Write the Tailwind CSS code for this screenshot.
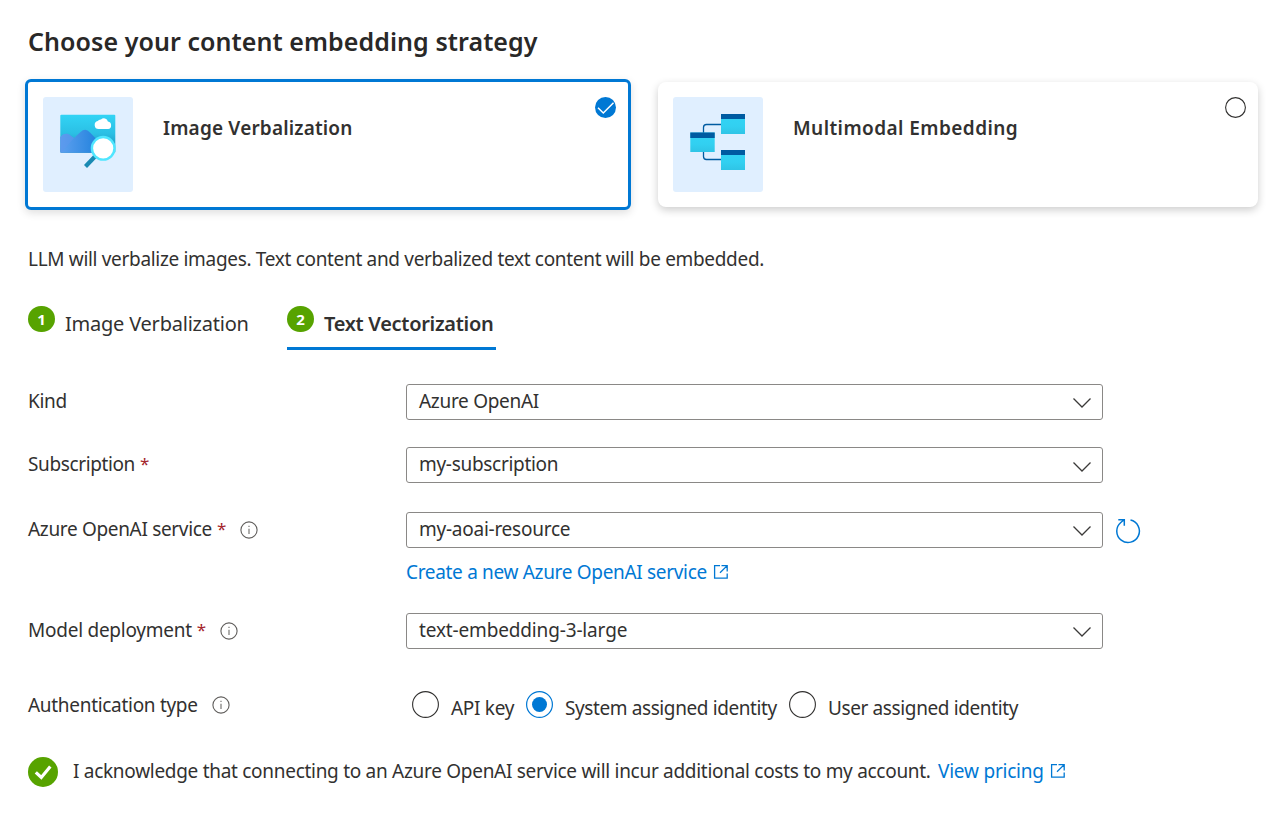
<!DOCTYPE html>
<html lang="en">
<head>
<meta charset="utf-8">
<title>Content embedding strategy</title>
<script src="https://cdn.jsdelivr.net/npm/@tailwindcss/browser@4"></script>
</head>
<body class="bg-white">
<svg class="hidden">
  <defs>
    <symbol id="chev" viewBox="0 0 20 12"><path d="M1.500 1.500 10 10 18.500 1.500" fill="none" stroke="#3b3a39" stroke-width="1.300"/></symbol>
    <symbol id="info" viewBox="0 0 18 18"><circle cx="9" cy="9" r="8.100" fill="none" stroke="#605e5c" stroke-width="1.100"/><path d="M9 7.800V13M9 4.800v1.300" stroke="#797775" stroke-width="1.200"/></symbol>
    <symbol id="ext" viewBox="0 0 16 16"><path d="M7 1.600H1.600V14.200H14.200V9.500M8.500 1.600h5.700V7.500M14.200 1.600 7 8.800" fill="none" stroke="#0078d4" stroke-width="1.300"/></symbol>
  </defs>
</svg>
<main class="flex h-[815px] w-[1284px] flex-col overflow-hidden font-['Noto_Sans',sans-serif] text-[19px] leading-7 tracking-[-0.3px] whitespace-nowrap text-[#323130]">
  <h1 class="mt-[27px] ml-7 h-[52px] text-[25px] font-semibold tracking-[0.07px] text-[#292827]">Choose your content embedding strategy</h1>

  <section class="ml-[25px] flex h-[131px] items-center gap-[27px]">
    <div class="flex h-[131px] w-[606px] rounded-[6px] border-3 border-[#0078d4] bg-white pt-[15px] pr-3 pl-[15px] shadow-[0_3px_8px_rgba(0,0,0,0.13)]">
      <div class="flex h-[95px] w-[90px] items-start rounded-[3px] bg-[#e0efff] pt-[15px] pl-[15px]">
        <svg width="60" height="58" viewBox="0 0 60 58">
          <defs>
            <linearGradient id="sky" x1="0" y1="0" x2="0" y2="1"><stop offset="0" stop-color="#32d4f5"/><stop offset="0.500" stop-color="#2bbfe4"/><stop offset="1" stop-color="#198ab3"/></linearGradient>
            <linearGradient id="hill" x1="0" y1="0" x2="1" y2="0"><stop offset="0" stop-color="#5ea0ef"/><stop offset="1" stop-color="#1b7fdb"/></linearGradient>
          </defs>
          <rect x="2.300" y="2.700" width="55" height="38" rx="1" fill="url(#sky)"/>
          <path d="M2.300 25C5 21.500 9.500 20.500 12.500 23.500L16 26 22.500 20Q27.500 15.500 32 20.500L44 33V40.700H3.300a1 1 0 0 1-1-1Z" fill="url(#hill)"/>
          <path d="M2.300 25C5 21.500 9.500 20.500 12.500 23.500L16 26 3.300 40.700a1 1 0 0 1-1-1Z" fill="#5b97ec" opacity="0.600"/>
          <path d="M40.600 17a4 4 0 0 1-.8-7.900 3.300 3.300 0 0 1 3.200-1.700 4.200 4.200 0 0 1 6.900 2q3.400.4 3.200 4.300a3.300 3.300 0 0 1-3 3.300Z" fill="#fff"/>
          <path d="M37 44.500 27.500 54.500" stroke="#198ab3" stroke-width="4.200"/>
          <circle cx="45.200" cy="36.300" r="11.300" fill="#fff" stroke="#50e6ff" stroke-width="2.400"/>
        </svg>
      </div>
      <h2 class="mt-[17px] ml-[30px] flex-1 font-semibold tracking-[0.17px]">Image Verbalization</h2>
      <svg width="21" height="21" viewBox="0 0 21 21"><circle cx="10.500" cy="10.500" r="10.500" fill="#0078d4"/><path d="M3 10.800 8.300 16 18.500 5.800" fill="none" stroke="#fff" stroke-width="1.500"/></svg>
    </div>
    <div class="flex h-[125px] w-[600px] rounded-[8px] bg-white pt-[15px] pr-3 pl-[15px] shadow-[0_3px_9px_rgba(0,0,0,0.2)]">
      <div class="flex h-[95px] w-[90px] items-start rounded-[3px] bg-[#e0efff] pt-[15px] pl-[15px]">
        <svg width="60" height="60" viewBox="0 0 60 60">
          <defs><linearGradient id="tile" x1="0" y1="0" x2="0" y2="1"><stop offset="0" stop-color="#32d4f5"/><stop offset="0.600" stop-color="#32d0f1"/><stop offset="1" stop-color="#2fc4e6"/></linearGradient></defs>
          <path d="M33 12.500H18.500a3 3 0 0 0-3 3V22M15.500 38v6.500a3 3 0 0 0 3 3H33" fill="none" stroke="#005ba1" stroke-width="1.300"/>
          <rect x="33" y="2" width="24" height="20" fill="url(#tile)"/><rect x="33" y="2" width="24" height="5" fill="#005ba1"/>
          <rect x="2.300" y="20.500" width="24.400" height="19.500" fill="url(#tile)"/><rect x="2.300" y="20.500" width="24.400" height="5.500" fill="#005ba1"/>
          <rect x="33" y="38" width="24" height="20" fill="url(#tile)"/><rect x="33" y="38" width="24" height="5" fill="#005ba1"/>
        </svg>
      </div>
      <h2 class="mt-[17px] ml-[30px] flex-1 font-semibold tracking-[0.43px]">Multimodal Embedding</h2>
      <svg width="21" height="21" viewBox="0 0 21 21"><circle cx="10.500" cy="10.500" r="9.900" fill="#fff" stroke="#323130" stroke-width="1.100"/></svg>
    </div>
  </section>

  <p class="mt-[35px] ml-7 tracking-[-0.32px]">LLM will verbalize images. Text content and verbalized text content will be embedded.</p>

  <nav class="mt-[32px] ml-7 flex h-[45px] text-[20px]">
    <div class="flex w-[259px]">
      <b class="mt-px mr-[10px] h-[26px] w-[27px] shrink-0 rounded-full bg-[#57a300] text-center text-[15px] leading-[27px] text-white">1</b>
      <span class="h-7 pt-[5px] tracking-[-0.22px]">Image Verbalization</span>
    </div>
    <div class="flex w-[209px] border-b-3 border-[#0078d4]">
      <b class="mt-px mr-[10px] h-[26px] w-[27px] shrink-0 rounded-full bg-[#57a300] text-center text-[15px] leading-[27px] text-white">2</b>
      <span class="h-7 pt-[5px] font-semibold tracking-[-0.3px]">Text Vectorization</span>
    </div>
  </nav>

  <div class="mt-[34px] ml-7 flex h-9 items-center">
    <div class="flex w-[378px] pb-0.5">Kind</div>
    <div class="flex h-9 w-[697px] items-center justify-between rounded-[3px] border border-[#8a8886] pr-[10px] pl-3"><span class="pb-0.5">Azure OpenAI</span><svg class="mt-0.5 h-3 w-5"><use href="#chev"/></svg></div>
  </div>
  <div class="mt-[27px] ml-7 flex h-9 items-center">
    <div class="flex w-[378px] pb-0.5"><span class="tracking-[-0.38px]">Subscription</span><span class="ml-[5px] text-[17px] text-[#a4262c]">*</span></div>
    <div class="flex h-9 w-[697px] items-center justify-between rounded-[3px] border border-[#8a8886] pr-[10px] pl-3"><span class="pb-0.5">my-subscription</span><svg class="mt-[3px] h-3 w-5"><use href="#chev"/></svg></div>
  </div>
  <div class="mt-[29px] ml-7 flex h-9 items-center">
    <div class="flex w-[378px] items-center pb-0.5"><span class="tracking-[-0.33px]">Azure OpenAI service</span><span class="ml-[5px] text-[17px] text-[#a4262c]">*</span><svg class="mt-px ml-[14px] h-[18px] w-[18px]"><use href="#info"/></svg></div>
    <div class="flex h-9 w-[697px] items-center justify-between rounded-[3px] border border-[#8a8886] pr-[10px] pl-3"><span class="pb-0.5 tracking-[-0.25px]">my-aoai-resource</span><svg class="mt-0.5 h-3 w-5"><use href="#chev"/></svg></div>
    <svg class="mt-0.5 ml-3" width="26" height="27" viewBox="0 0 26 27" fill="none" stroke="#0078d4" stroke-width="1.500"><path d="M15.500 2.100A11.300 11.300 0 1 1 5.800 4.500L9 1.800M3.300 1.800H9.300V7.700"/></svg>
  </div>
  <p class="mt-[10px] mb-px ml-[406px] flex h-7 items-center text-[#0078d4]"><span class="tracking-[-0.32px]">Create a new Azure OpenAI service</span><svg class="ml-[6px] h-4 w-4"><use href="#ext"/></svg></p>
  <div class="mt-[26px] ml-7 flex h-9 items-center">
    <div class="flex w-[378px] items-center pb-0.5"><span class="tracking-[-0.25px]">Model deployment</span><span class="ml-[5px] text-[17px] text-[#a4262c]">*</span><svg class="mt-px ml-[14px] h-[18px] w-[18px]"><use href="#info"/></svg></div>
    <div class="flex h-9 w-[697px] items-center justify-between rounded-[3px] border border-[#8a8886] pr-[10px] pl-3"><span class="pb-0.5 tracking-[-0.15px]">text-embedding-3-large</span><svg class="mt-0.5 h-3 w-5"><use href="#chev"/></svg></div>
  </div>
  <div class="mt-[41px] ml-7 flex h-[30px] items-center">
    <div class="flex w-[384px] items-center"><span>Authentication type</span><svg class="ml-[14px] h-[18px] w-[18px]"><use href="#info"/></svg></div>
    <label class="flex w-[114px] items-center gap-3"><svg class="mb-0.5 shrink-0" width="27" height="27" viewBox="0 0 27 27"><circle cx="13.500" cy="13.500" r="12.900" fill="#fff" stroke="#323130" stroke-width="1.100"/></svg><span class="pt-[6px] tracking-[-0.3px]">API key</span></label>
    <label class="flex w-[263px] items-center gap-3"><svg class="mb-0.5 shrink-0" width="27" height="27" viewBox="0 0 27 27"><circle cx="13.500" cy="13.500" r="12.900" fill="#fff" stroke="#0078d4" stroke-width="1.200"/><circle cx="13.500" cy="13.500" r="7.500" fill="#0078d4"/></svg><span class="pt-[6px] tracking-[-0.4px]">System assigned identity</span></label>
    <label class="flex items-center gap-3"><svg class="mb-0.5 shrink-0" width="27" height="27" viewBox="0 0 27 27"><circle cx="13.500" cy="13.500" r="12.900" fill="#fff" stroke="#323130" stroke-width="1.100"/></svg><span class="pt-[6px] tracking-[-0.38px]">User assigned identity</span></label>
  </div>
  <div class="mt-[37px] ml-7 flex h-[30px] items-center">
    <svg class="mr-[15px]" width="30" height="30" viewBox="0 0 30 30"><circle cx="15" cy="15" r="15" fill="#57a300"/><path d="M7.800 15.300 13.300 20.500 22.300 9.500" fill="none" stroke="#fff" stroke-width="3.200"/></svg>
    <span class="w-[865px] pb-0.5 tracking-[-0.29px]">I acknowledge that connecting to an Azure OpenAI service will incur additional costs to my account.</span>
    <span class="pb-0.5 tracking-[-0.22px] text-[#0078d4]">View pricing</span><svg class="mb-0.5 ml-[6px] h-4 w-4"><use href="#ext"/></svg>
  </div>
</main>
</body>
</html>
